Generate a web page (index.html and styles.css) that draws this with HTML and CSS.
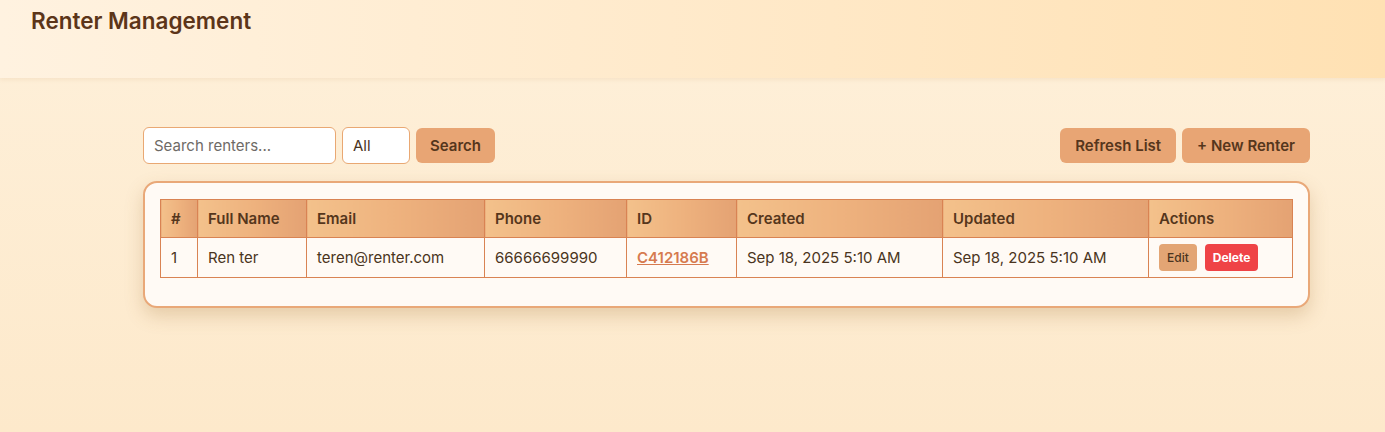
FILE: index.html
```html
<!DOCTYPE html>
<html lang="en">
<head>
<meta charset="utf-8">
<title>Renter Management</title>
<link rel="stylesheet" href="styles.css">
</head>
<body>
<header class="topbar">
  <h1 class="title">Renter Management</h1>
</header>
<main class="content">
  <div class="toolbar">
    <div class="filters">
      <input class="search" type="text" placeholder="Search renters...">
      <select class="select"><option>All</option></select>
      <button class="btn">Search</button>
    </div>
    <div class="actions">
      <button class="btn">Refresh List</button>
      <button class="btn">+ New Renter</button>
    </div>
  </div>
  <section class="card">
    <table class="grid">
      <thead>
        <tr>
          <th class="c-num">#</th>
          <th class="c-name">Full Name</th>
          <th class="c-email">Email</th>
          <th class="c-phone">Phone</th>
          <th class="c-id">ID</th>
          <th class="c-date">Created</th>
          <th class="c-date">Updated</th>
          <th class="c-act">Actions</th>
        </tr>
      </thead>
      <tbody>
        <tr>
          <td>1</td>
          <td>Ren ter</td>
          <td>teren@renter.com</td>
          <td>66666699990</td>
          <td><a class="idlink" href="#">C412186B</a></td>
          <td>Sep 18, 2025 5:10 AM</td>
          <td>Sep 18, 2025 5:10 AM</td>
          <td><div class="rowbtns"><button class="sm edit">Edit</button><button class="sm del">Delete</button></div></td>
        </tr>
      </tbody>
    </table>
  </section>
</main>
</body>
</html>
```
FILE: styles.css
```css
* { box-sizing: border-box; }
html, body { margin: 0; padding: 0; }
body {
  min-height: 432px;
  font-family: "Inter", "Noto Sans", sans-serif;
  color: #4a3420;
  background: linear-gradient(180deg, #fef0da 0%, #fde9cb 100%);
}
.topbar {
  height: 78px;
  padding: 7px 31px 0;
  background: linear-gradient(90deg, #fff2e0 0%, #ffe8c6 60%, #ffe1b3 100%);
  box-shadow: 0 2px 4px rgba(200, 150, 90, 0.12);
}
.title {
  margin: 0;
  font-size: 22.5px;
  font-weight: 600;
  color: #5c3519;
  line-height: 28px;
}
.content {
  padding: 49px 75px 0 143px;
}
.toolbar {
  display: flex;
  justify-content: space-between;
  align-items: center;
  height: 37px;
}
.filters, .actions {
  display: flex;
  align-items: center;
  gap: 6px;
}
.search, .select {
  height: 37px;
  border: 1px solid #e9a873;
  border-radius: 6px;
  background: #fff;
  font-family: inherit;
  font-size: 15px;
  color: #4a3420;
  padding: 0 10px;
}
.search { width: 193px; }
.search::placeholder { color: #6e6a66; }
.select {
  width: 68px;
  appearance: none;
  -webkit-appearance: none;
}
.btn {
  height: 35px;
  padding: 0 14px;
  border: none;
  border-radius: 6px;
  background: #e8a574;
  color: #55361c;
  font-family: inherit;
  font-size: 15px;
  font-weight: 600;
}
.actions .btn { padding: 0 15px; }
.card {
  margin-top: 17px;
  background: #fffaf5;
  border: 2px solid #e9a878;
  border-radius: 14px;
  padding: 16px 16px 28px 15px;
  box-shadow: 0 8px 18px rgba(160, 110, 50, 0.25);
}
.grid {
  width: 100%;
  border-collapse: collapse;
  table-layout: fixed;
  font-size: 15px;
}
.grid th, .grid td {
  border: 1px solid #d98353;
  text-align: left;
  padding: 0 10px;
  white-space: nowrap;
}
.grid th {
  height: 38px;
  font-weight: 600;
  color: #55361c;
  background: linear-gradient(90deg, #f3c18b 0%, #eeb27e 50%, #e4a273 100%);
}
.grid td {
  height: 40px;
  color: #4a3420;
  background: #fffaf5;
}
.c-num { width: 37px; }
.c-name { width: 109px; }
.c-email { width: 178px; }
.c-phone { width: 142px; }
.c-id { width: 110px; }
.c-date { width: 206px; }
.c-act { width: 144px; }
.idlink {
  color: #d67a4f;
  font-weight: 600;
  text-decoration: underline;
}
.rowbtns {
  display: flex;
  gap: 8px;
  align-items: center;
}
.sm {
  height: 27px;
  border: none;
  border-radius: 4px;
  font-family: inherit;
  font-size: 12px;
  padding: 0 8px;
}
.edit { background: #e3a574; color: #4a3420; font-weight: 500; }
.del { background: #ef4346; color: #fff; font-weight: 700; }
```
